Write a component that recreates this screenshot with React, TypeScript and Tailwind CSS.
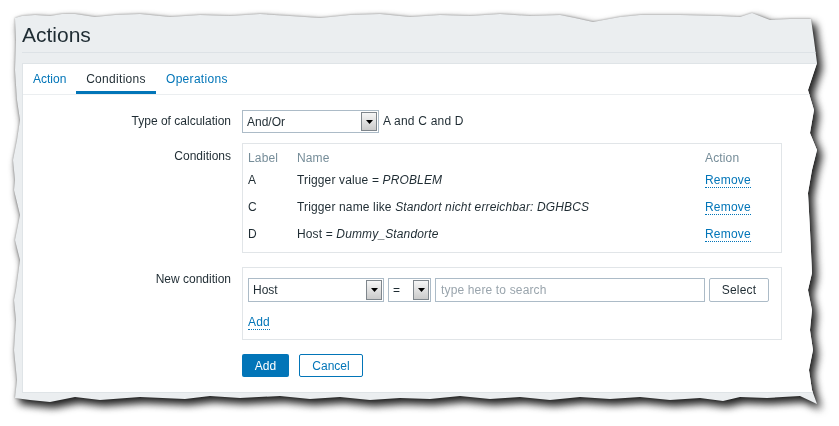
import React from "react";

function SelectArrow() {
  return (
    <span className="m-px flex w-[16px] items-center justify-center border border-[#7f868c] bg-linear-to-b from-[#f6f6f6] to-[#cbcbcb]">
      <svg width="7" height="4" viewBox="0 0 7 4" aria-hidden>
        <path d="M0 0h7L3.5 4z" fill="#000" />
      </svg>
    </span>
  );
}

function FakeSelect({ value, className }: { value: string; className: string }) {
  return (
    <div className={`flex border border-[#acbbc7] bg-white ${className}`}>
      <span className="flex flex-1 items-center pl-[4px] text-[#1f2c33]">{value}</span>
      <SelectArrow />
    </div>
  );
}

function DottedLink({ children }: { children: React.ReactNode }) {
  return (
    <span className="border-b border-dotted border-[#0275b8] leading-[14px] tracking-[0.2px] text-[#0275b8]">
      {children}
    </span>
  );
}

const conditions = [
  { label: "A", prefix: "Trigger value = ", value: "PROBLEM" },
  { label: "C", prefix: "Trigger name like ", value: "Standort nicht erreichbar: DGHBCS" },
  { label: "D", prefix: "Host = ", value: "Dummy_Standorte" },
];

export default function App() {
  return (
    <div className="h-[426px] w-[839px] overflow-hidden bg-white pl-[12px] pt-[11px] font-['Liberation_Sans',Arial,sans-serif] text-[12px] text-[#1f2c33]">
      <div className="[filter:drop-shadow(4px_5px_4px_rgba(0,0,0,0.85))_drop-shadow(0_0_1px_rgba(0,0,0,0.4))]">
        <div className="h-[396px] w-[808px] bg-[#ebeef0] pl-[10px] pt-[12px] [clip-path:polygon(3px_7px,10px_5px,23px_4px,38px_5px,50px_3px,63px_3px,83px_6px,103px_4px,128px_3px,158px_6px,188px_4px,218px_5px,248px_3px,278px_5px,308px_7px,338px_4px,368px_3px,398px_6px,428px_4px,458px_5px,488px_3px,518px_5px,548px_4px,563px_7px,581px_11px,608px_6px,628px_4px,668px_4px,708px_5px,728px_6px,740px_2px,758px_9px,778px_8px,799px_8px,802px_29px,805px_52px,796px_79px,802px_99px,798px_122px,805px_139px,800px_159px,796px_182px,798px_219px,800px_262px,796px_279px,800px_299px,798px_319px,801px_339px,797px_359px,800px_379px,805px_393px,788px_385px,755px_387px,728px_386px,711px_390px,688px_387px,658px_389px,628px_386px,598px_388px,568px_386px,538px_389px,508px_386px,478px_388px,448px_385px,418px_388px,388px_387px,358px_389px,328px_386px,298px_388px,268px_385px,228px_387px,198px_385px,173px_388px,128px_386px,88px_389px,63px_386px,38px_391px,18px_389px,3px_387px,5px_369px,2px_339px,4px_309px,2px_289px,4px_279px,8px_249px,3px_229px,8px_204px,2px_179px,3px_169px,1px_149px,5px_129px,8px_109px,5px_89px,3px_59px,4px_29px)]">
          {/* page title */}
          <div className="border-b border-[#dde2e6] pb-[5px]">
            <h1 className="text-[21px] leading-[24px] text-[#1f2c33]">Actions</h1>
          </div>

          <div className="mt-[10px] border border-r-0 border-[#dfe4e7] bg-white pb-[15px]">
            {/* tabs */}
            <div className="flex border-b border-[#ebeef0]">
              <span className="flex h-[30px] w-[53px] items-center px-[10px] text-[#0275b8]">Action</span>
              <span className="flex h-[30px] w-[80px] items-center justify-center tracking-[0.3px] shadow-[inset_0_-3px_0_#0275b8]">
                Conditions
              </span>
              <span className="flex h-[30px] items-center px-[10px] tracking-[0.3px] text-[#0275b8]">Operations</span>
            </div>

            <div className="pt-[15px]">
              {/* type of calculation */}
              <div className="flex items-start">
                <div className="w-[208px] pt-[4px] text-right leading-[15px]">Type of calculation</div>
                <div className="ml-[11px] flex items-center">
                  <FakeSelect value="And/Or" className="h-[23px] w-[137px]" />
                  <span className="ml-[4px] leading-[23px] tracking-[0.2px]">A and C and D</span>
                </div>
              </div>

              {/* conditions list */}
              <div className="mt-[10px] flex items-start">
                <div className="w-[208px] pt-[6px] text-right leading-[15px]">Conditions</div>
                <div className="ml-[11px] w-[540px] border border-[#e1e5e8] p-[5px] tracking-[0.14px]">
                  <div className="flex h-[17px] items-center text-[#768d99]">
                    <span className="w-[49px]">Label</span>
                    <span className="flex-1">Name</span>
                    <span className="w-[71px]">Action</span>
                  </div>
                  {conditions.map((c) => (
                    <div key={c.label} className="flex h-[27px] items-center">
                      <span className="w-[49px]">{c.label}</span>
                      <span className="flex-1">
                        {c.prefix}
                        <i>{c.value}</i>
                      </span>
                      <span className="w-[71px]">
                        <DottedLink>Remove</DottedLink>
                      </span>
                    </div>
                  ))}
                </div>
              </div>

              {/* new condition */}
              <div className="mt-[14px] flex items-start">
                <div className="w-[208px] pt-[5px] text-right leading-[15px]">New condition</div>
                <div className="ml-[11px] w-[540px] border border-[#e1e5e8] px-[5px] pb-[8px] pt-[10px]">
                  <div className="flex h-[24px] gap-[4px]">
                    <FakeSelect value="Host" className="w-[136px]" />
                    <FakeSelect value="=" className="w-[43px]" />
                    <div className="flex w-[270px] items-center border border-[#acbbc7] pl-[5px] tracking-[0.15px] text-[#9aa5ad]">
                      type here to search
                    </div>
                    <button
                      type="button"
                      className="w-[60px] rounded-[2px] border border-[#acbbc7] bg-white tracking-[0.2px] text-[#1f2c33]"
                    >
                      Select
                    </button>
                  </div>
                  <div className="mt-[13px] flex h-[16px] items-start">
                    <DottedLink>Add</DottedLink>
                  </div>
                </div>
              </div>

              {/* form buttons */}
              <div className="ml-[219px] mt-[14px] flex gap-[10px]">
                <button
                  type="button"
                  className="h-[23px] w-[47px] rounded-[2px] bg-[#0275b8] text-[12px] text-white"
                >
                  Add
                </button>
                <button
                  type="button"
                  className="h-[23px] w-[64px] rounded-[2px] border border-[#0275b8] bg-white text-[12px] text-[#0275b8]"
                >
                  Cancel
                </button>
              </div>
            </div>
          </div>
        </div>
      </div>
    </div>
  );
}
